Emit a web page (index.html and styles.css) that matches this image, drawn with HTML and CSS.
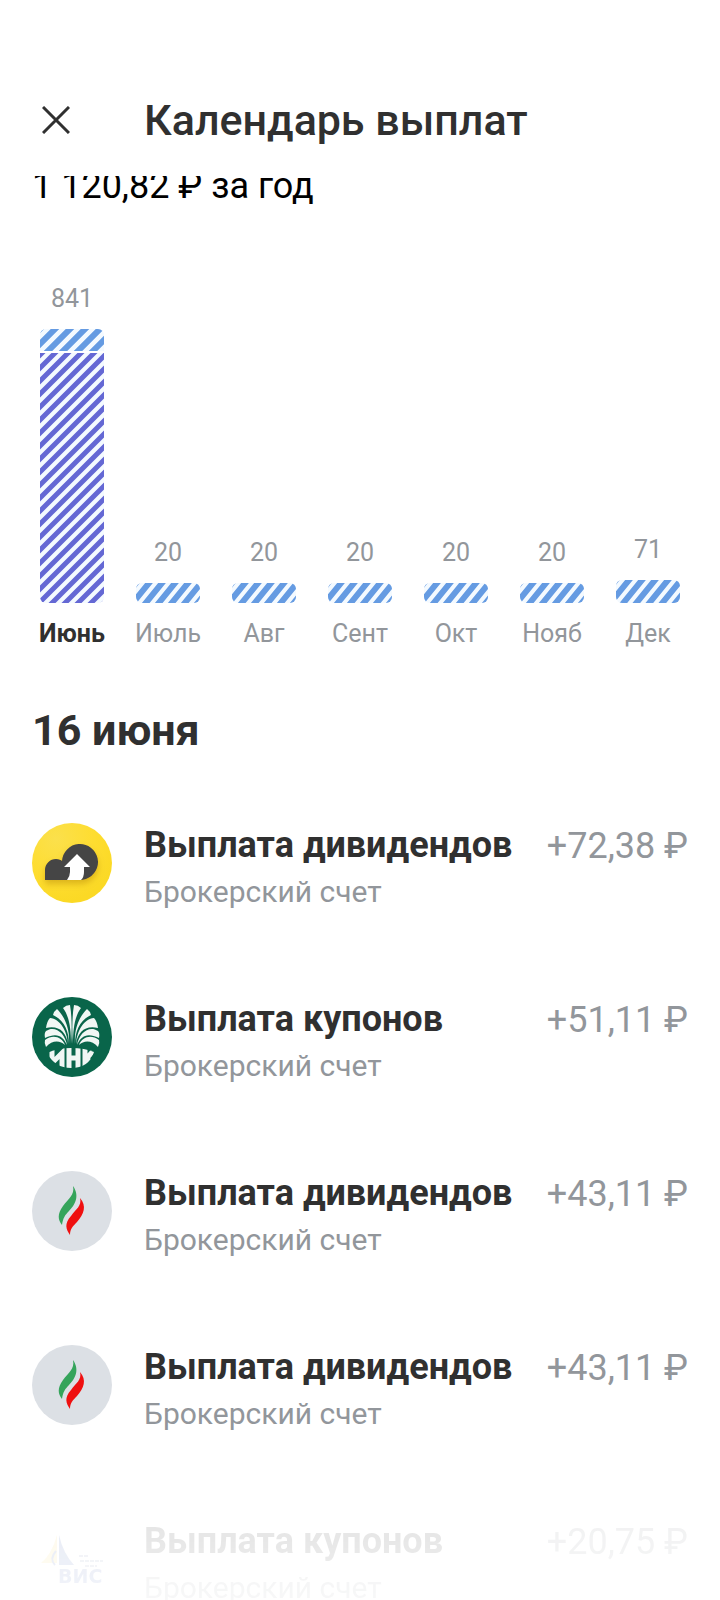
FILE: index.html
```html
<!DOCTYPE html>
<html lang="ru">
<head>
<meta charset="utf-8">
<meta name="viewport" content="width=device-width, initial-scale=1">
<title>Календарь выплат</title>
<link rel="stylesheet" href="styles.css">
</head>
<body>
<svg class="defs" aria-hidden="true">
  <defs>
    <pattern id="stripe-blue" width="15" height="15" patternUnits="userSpaceOnUse">
      <path class="stripe blue" d="M-4 19L19 -4M-4 4L4 -4M11 19L19 11"/>
    </pattern>
    <pattern id="stripe-steep" width="13" height="16" patternUnits="userSpaceOnUse">
      <path class="stripe blue" d="M-13 32L26 -16M-13 16L13 -16M0 32L26 0"/>
    </pattern>
    <pattern id="stripe-violet" width="13" height="13" patternUnits="userSpaceOnUse">
      <path class="stripe violet" d="M-4 17L17 -4M-4 4L4 -4M9 17L17 9"/>
    </pattern>
    <symbol id="flame" viewBox="0 0 80 80">
      <circle cx="40" cy="40" r="40" fill="#dce0e5"/>
      <path fill="#35a45b" d="M41 15C43 24 36 28 31 35C25 43 26 49 30 54C31 47 33 44 37 40C43 34 48 25 41 15Z"/>
      <path fill="#ef1010" d="M48 27C50 35 44 38 39 45C32 53 34 58 38 64C38 58 41 55 45 51C52 43 55 35 48 27Z"/>
    </symbol>
  </defs>
</svg>

<header class="topbar">
  <button class="close" type="button" aria-label="Закрыть">
    <svg width="28" height="28" viewBox="0 0 28 28"><path d="M1 1L27 27M27 1L1 27"/></svg>
  </button>
  <h1 class="title">Календарь выплат</h1>
</header>

<main class="scroll">
  <div class="summary"><p class="total">1 120,82 ₽ за год</p></div>

  <section class="chart" aria-label="Выплаты по месяцам">
    <div class="month active"><span class="value">841</span>
      <svg class="bar june"><rect width="100%" height="22" fill="url(#stripe-blue)"/><rect y="22" width="100%" height="2" fill="#fff"/><rect y="24" width="100%" height="250" fill="url(#stripe-violet)"/></svg>
      <span class="name">Июнь</span></div>
    <div class="month"><span class="value">20</span><svg class="bar"><rect width="100%" height="100%" fill="url(#stripe-steep)"/></svg><span class="name">Июль</span></div>
    <div class="month"><span class="value">20</span><svg class="bar"><rect width="100%" height="100%" fill="url(#stripe-steep)"/></svg><span class="name">Авг</span></div>
    <div class="month"><span class="value">20</span><svg class="bar"><rect width="100%" height="100%" fill="url(#stripe-steep)"/></svg><span class="name">Сент</span></div>
    <div class="month"><span class="value">20</span><svg class="bar"><rect width="100%" height="100%" fill="url(#stripe-steep)"/></svg><span class="name">Окт</span></div>
    <div class="month"><span class="value">20</span><svg class="bar"><rect width="100%" height="100%" fill="url(#stripe-steep)"/></svg><span class="name">Нояб</span></div>
    <div class="month"><span class="value">71</span><svg class="bar december"><rect width="100%" height="100%" fill="url(#stripe-steep)"/></svg><span class="name">Дек</span></div>
  </section>

  <h2 class="date">16 июня</h2>

  <ul class="list">
    <li class="row">
      <svg class="logo" viewBox="0 0 80 80" aria-hidden="true">
        <defs>
          <radialGradient id="sun" cx=".3" cy=".2" r=".8"><stop offset="0" stop-color="#fbe04c"/><stop offset=".6" stop-color="#fedd30"/><stop offset="1" stop-color="#fbd925"/></radialGradient>
          <filter id="shade" x="-20%" y="-20%" width="140%" height="160%"><feDropShadow dx="0" dy="4" stdDeviation="3" flood-color="#a87800" flood-opacity=".4"/></filter>
        </defs>
        <circle cx="40" cy="40" r="40" fill="url(#sun)"/>
        <path filter="url(#shade)" fill="#444" d="M13 57V47A11 11 0 0 1 24 36C27 36 29 37 30 38A18 18 0 1 1 54 56Q51 57 48 57Z"/>
        <path fill="#fff" d="M45 31L58 44H52V49Q52 54 49 57H35Q38 53 38 49V44H32Z"/>
      </svg>
      <div class="text"><h3 class="name-line">Выплата дивидендов</h3><p class="account">Брокерский счет</p></div>
      <span class="amount">+72,38 ₽</span>
    </li>
    <li class="row">
      <svg class="logo" viewBox="0 0 80 80" aria-hidden="true">
        <circle cx="40" cy="40" r="40" fill="#09654a"/>
        <g id="fronds" fill="#f1f7f4">
          <path d="M39 47C39 31 37 19 31 11Q34 8 38 8C40 20 40 34 39 47Z"/>
          <path d="M37 47C37 34 32 23 21 18Q22 14 25 12C33 20 38 32 37 47Z"/>
          <path d="M36 47C34 35 27 28 14 31Q15 24 18 21C28 22 35 33 36 47Z"/>
          <path d="M35 48C31 39 25 35 13 41Q12 36 14 34C23 28 33 36 35 48Z"/>
          <path d="M33 48C28 43 20 43 14 50Q12 46 13 43C21 37 30 40 33 48Z"/>
        </g>
        <use href="#fronds" transform="matrix(-1 0 0 1 80 0)"/>
        <clipPath id="lens"><path d="M15 56Q26 51 39 51Q53 51 62 55Q57 71 39 71Q23 71 15 56Z"/></clipPath>
        <g clip-path="url(#lens)" fill="none" stroke="#f1f7f4" stroke-width="5"><path d="M20 50V66L30 56V74M37 50V74M46 50V74M37 61H46M53 50V74M62 53L55 61L61 70"/></g>
      </svg>
      <div class="text"><h3 class="name-line">Выплата купонов</h3><p class="account">Брокерский счет</p></div>
      <span class="amount">+51,11 ₽</span>
    </li>
    <li class="row">
      <svg class="logo" aria-hidden="true"><use href="#flame"/></svg>
      <div class="text"><h3 class="name-line">Выплата дивидендов</h3><p class="account">Брокерский счет</p></div>
      <span class="amount">+43,11 ₽</span>
    </li>
    <li class="row">
      <svg class="logo" aria-hidden="true"><use href="#flame"/></svg>
      <div class="text"><h3 class="name-line">Выплата дивидендов</h3><p class="account">Брокерский счет</p></div>
      <span class="amount">+43,11 ₽</span>
    </li>
    <li class="row faded">
      <svg class="logo" viewBox="0 0 80 80" aria-hidden="true">
        <path fill="#f3d56b" d="M25 16V44H9Q20 35 25 16Z"/>
        <path fill="#4967b5" d="M27 16Q31 34 42 46H27Z"/>
        <path fill="none" stroke="#4967b5" stroke-width="2" d="M24 32Q17 40 23 46"/>
        <path fill="none" stroke="#8998b8" stroke-width="2" stroke-dasharray="4 1" d="M47 37H56M48 42H71M53 47H65"/>
        <text class="vis" x="26" y="64">ВИС</text>
      </svg>
      <div class="text"><h3 class="name-line">Выплата купонов</h3><p class="account">Брокерский счет</p></div>
      <span class="amount">+20,75 ₽</span>
    </li>
  </ul>
</main>
</body>
</html>
```
FILE: styles.css
```css
* { box-sizing: border-box; }

html, body { height: 100%; }

body {
  margin: 0;
  display: flex;
  flex-direction: column;
  overflow: hidden;
  background: #fff;
  color: #303030;
  font-family: Roboto, "Noto Sans", sans-serif;
}

h1, h2, h3, p, ul { margin: 0; padding: 0; }

.defs { position: absolute; width: 0; height: 0; }
.stripe { fill: none; }
.blue { stroke: #659be2; stroke-width: 6; }
.violet { stroke: #6468d4; stroke-width: 5; }

.topbar {
  display: flex;
  flex: none;
  align-items: center;
  gap: 72px;
  padding: 92px 32px 28px 40px;
}

.close {
  display: flex;
  padding: 2px;
  border: 0;
  background: none;
}
.close svg { fill: none; stroke: #303030; stroke-width: 3; }

.title { font-size: 43px; line-height: 56px; font-weight: 500; }

.scroll { flex: 1; min-height: 0; overflow: hidden; }

.summary {
  display: flex;
  align-items: flex-end;
  height: 30px;
  overflow: hidden;
  padding: 0 32px;
}
.total { color: #000; font-size: 36px; line-height: 40px; }

.chart {
  display: grid;
  grid-template-columns: repeat(7, 1fr);
  align-items: end;
  margin-top: 77px;
  padding: 0 24px;
}
.month {
  display: flex;
  flex-direction: column;
  align-items: center;
  color: #92969b;
  font-size: 25px;
  line-height: 32px;
}
.bar {
  width: 64px;
  height: 20px;
  margin: 14px 0 15px;
  border-radius: 6px;
  background: #f4faff;
}
.june { height: 274px; }
.december { height: 23px; }
.active .name { color: #303030; font-weight: 700; }

.date { padding: 52px 32px 0; font-size: 43px; line-height: 56px; }

.list { margin-top: 18px; list-style: none; }
.row {
  display: flex;
  align-items: center;
  gap: 32px;
  height: 174px;
  padding: 0 32px;
}
.logo { flex: none; width: 80px; height: 80px; }
.text { flex: 1; min-width: 0; padding-top: 10px; white-space: nowrap; }
.name-line { font-size: 36px; line-height: 48px; }
.account { color: #92969b; font-size: 30px; line-height: 46px; }
.amount {
  align-self: flex-start;
  margin-top: 46px;
  color: #92969b;
  font-size: 36px;
  line-height: 48px;
}
.faded {
  -webkit-mask-image: linear-gradient(rgba(0, 0, 0, .16), rgba(0, 0, 0, .04));
  mask-image: linear-gradient(rgba(0, 0, 0, .16), rgba(0, 0, 0, .04));
}
.vis { fill: #4967b5; font-family: "DejaVu Sans", sans-serif; font-size: 19px; font-weight: 700; }
```
